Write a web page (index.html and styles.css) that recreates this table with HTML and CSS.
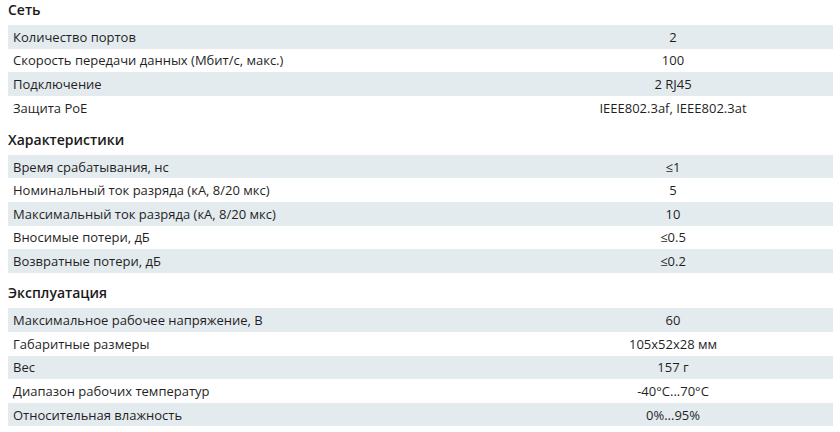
FILE: index.html
```html
<!DOCTYPE html>
<html lang="ru">
<head>
<meta charset="utf-8">
<link rel="stylesheet" href="styles.css">
</head>
<body>
<section class="spec">
  <h2 class="spec-title">Сеть</h2>
  <table class="spec-table">
    <tr><td class="name">Количество портов</td><td class="val">2</td></tr>
    <tr><td class="name">Скорость передачи данных (Мбит/с, макс.)</td><td class="val">100</td></tr>
    <tr><td class="name">Подключение</td><td class="val">2 RJ45</td></tr>
    <tr><td class="name">Защита PoE</td><td class="val">IEEE802.3af, IEEE802.3at</td></tr>
  </table>
</section>
<section class="spec">
  <h2 class="spec-title">Характеристики</h2>
  <table class="spec-table">
    <tr><td class="name">Время срабатывания, нс</td><td class="val">≤1</td></tr>
    <tr><td class="name">Номинальный ток разряда (кА, 8/20 мкс)</td><td class="val">5</td></tr>
    <tr><td class="name">Максимальный ток разряда (кА, 8/20 мкс)</td><td class="val">10</td></tr>
    <tr><td class="name">Вносимые потери, дБ</td><td class="val">≤0.5</td></tr>
    <tr><td class="name">Возвратные потери, дБ</td><td class="val">≤0.2</td></tr>
  </table>
</section>
<section class="spec">
  <h2 class="spec-title">Эксплуатация</h2>
  <table class="spec-table">
    <tr><td class="name">Максимальное рабочее напряжение, В</td><td class="val">60</td></tr>
    <tr><td class="name">Габаритные размеры</td><td class="val">105x52x28 мм</td></tr>
    <tr><td class="name">Вес</td><td class="val">157 г</td></tr>
    <tr><td class="name">Диапазон рабочих температур</td><td class="val">-40°C...70°C</td></tr>
    <tr><td class="name">Относительная влажность</td><td class="val">0%...95%</td></tr>
  </table>
</section>
</body>
</html>
```

FILE: styles.css
```css
html, body {
  margin: 0;
  background: #ffffff;
}
body {
  padding: 0 7px 0 8px;
  font-family: "Open Sans", "Noto Sans", sans-serif;
  font-size: 13px;
  color: #1f1f1f;
}
.spec + .spec {
  margin-top: 10.5px;
}
.spec-title {
  margin: 0;
  height: 25px;
  line-height: 20px;
  font-size: 14px;
  font-weight: 600;
  color: #1a1a1a;
}
.spec-table {
  width: 100%;
  border-collapse: collapse;
  table-layout: fixed;
}
.spec-table tr {
  height: 23.6px;
}
.spec-table tr:nth-child(odd) {
  background: #e4ebef;
}
.spec-table td {
  padding: 0 5px;
  line-height: 18px;
  vertical-align: middle;
}
.spec-table .name {
  width: 60%;
}
.spec-table .val {
  text-align: center;
}
```
